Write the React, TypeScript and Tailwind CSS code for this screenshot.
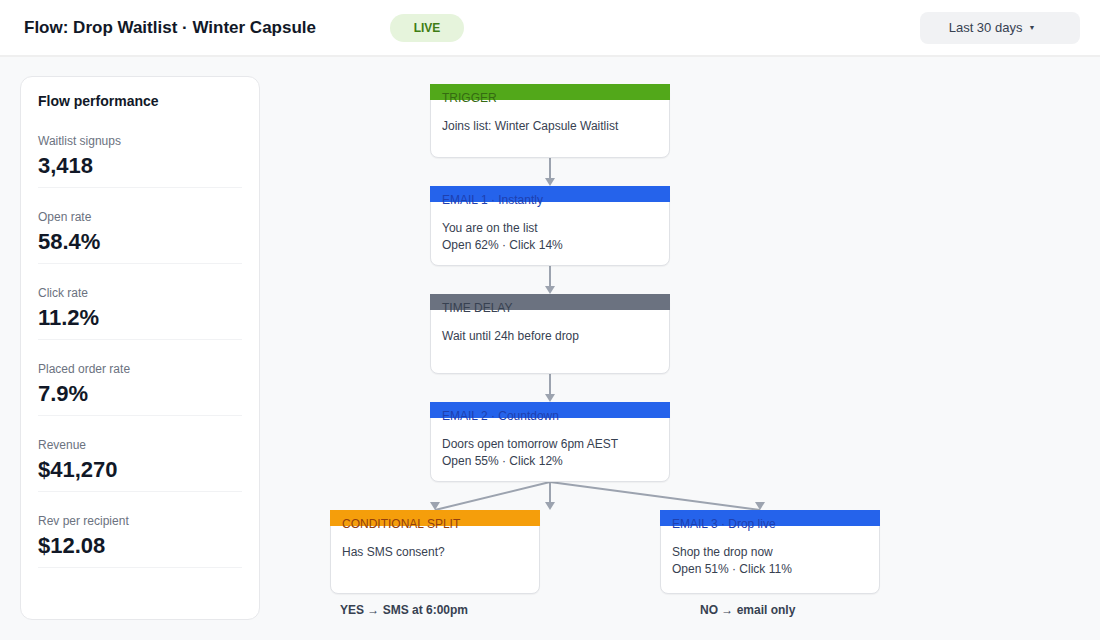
import React from "react";

type Metric = { label: string; value: string };

const metrics: Metric[] = [
  { label: "Waitlist signups", value: "3,418" },
  { label: "Open rate", value: "58.4%" },
  { label: "Click rate", value: "11.2%" },
  { label: "Placed order rate", value: "7.9%" },
  { label: "Revenue", value: "$41,270" },
  { label: "Rev per recipient", value: "$12.08" },
];

type NodeProps = {
  x: number;
  y: number;
  w: number;
  h: number;
  bar: string;
  labelColor: string;
  label: string;
  lines: string[];
};

function FlowNode({ x, y, w, h, bar, labelColor, label, lines }: NodeProps) {
  return (
    <div
      className="absolute rounded-lg border border-[#e0e2e6] bg-white shadow-[0_1px_1px_rgba(0,0,0,0.04)]"
      style={{ left: x, top: y, width: w, height: h }}
    >
      <div className={`absolute -left-px -right-px -top-px h-4 ${bar}`} />
      <div className={`relative px-[11px] pt-[5px] text-[12px] font-medium leading-[16px] ${labelColor}`}>
        {label}
      </div>
      <div className="relative mt-[12px] px-[11px] text-[12px] leading-[17px] text-[#374151]">
        {lines.map((l) => (
          <div key={l}>{l}</div>
        ))}
      </div>
    </div>
  );
}

function Arrow({ x, y }: { x: number; y: number }) {
  // arrowhead with its tip at (x, y)
  return <polygon points={`${x - 5},${y - 8} ${x + 5},${y - 8} ${x},${y}`} fill="#9ca3af" />;
}

export default function App() {
  return (
    <div
      className="flex h-[640px] w-[1100px] flex-col overflow-hidden bg-[#f8f9fa] text-[#111827]"
      style={{ fontFamily: '"Liberation Sans", Arial, sans-serif' }}
    >
      <header className="flex h-[57px] shrink-0 items-center border-b-2 border-[#efefef] bg-white pl-6 pr-5">
        <div className="w-[366px] text-[17px] font-bold">Flow: Drop Waitlist · Winter Capsule</div>
        <div className="flex h-7 w-[74px] items-center justify-center rounded-full bg-[#e6f4dc] text-[12px] font-bold text-[#3f7d14]">
          LIVE
        </div>
        <div className="ml-auto flex h-8 w-40 items-center justify-center gap-[6px] rounded-lg bg-[#f1f2f4] pr-4 text-[13px] text-[#374151]">
          <span>Last 30 days</span>
          <span className="text-[7px] leading-none">▼</span>
        </div>
      </header>

      <div className="flex flex-1 gap-5 px-5 pt-[19px] pb-5">
        <aside className="w-[240px] shrink-0 rounded-xl border border-[#e7e8eb] bg-white px-[17px] pt-[14px]">
          <div className="text-[14px] font-bold leading-[20px]">Flow performance</div>
          <div className="mt-[22px] flex flex-col gap-[21px]">
            {metrics.map((m) => (
              <div key={m.label} className="border-b border-[#f1f2f4] pb-[8px]">
                <div className="text-[12px] leading-[16px] text-[#6b7280]">{m.label}</div>
                <div className="mt-1 text-[22px] font-bold leading-[26px] text-[#111827]">{m.value}</div>
              </div>
            ))}
          </div>
        </aside>

        <div className="relative flex-1">
          <svg className="absolute inset-0" width="800" height="564">
            <g stroke="#9ca3af" strokeWidth="2" fill="none">
              <line x1="270" y1="82" x2="270" y2="104" />
              <line x1="270" y1="190" x2="270" y2="212" />
              <line x1="270" y1="298" x2="270" y2="320" />
              <line x1="270" y1="406" x2="270" y2="428" />
              <line x1="270" y1="406" x2="155" y2="434" />
              <line x1="270" y1="406" x2="480" y2="434" />
            </g>
            <Arrow x={270} y={110} />
            <Arrow x={270} y={218} />
            <Arrow x={270} y={326} />
            <Arrow x={270} y={434} />
            <Arrow x={155} y={434} />
            <Arrow x={480} y={434} />
          </svg>

          <FlowNode
            x={150}
            y={8}
            w={240}
            h={74}
            bar="bg-[#52a81a]"
            labelColor="text-[#356b12]"
            label="TRIGGER"
            lines={["Joins list: Winter Capsule Waitlist"]}
          />
          <FlowNode
            x={150}
            y={110}
            w={240}
            h={80}
            bar="bg-[#2563eb]"
            labelColor="text-[#1e40af]"
            label="EMAIL 1 · Instantly"
            lines={["You are on the list", "Open 62% · Click 14%"]}
          />
          <FlowNode
            x={150}
            y={218}
            w={240}
            h={80}
            bar="bg-[#6b7280]"
            labelColor="text-[#374151]"
            label="TIME DELAY"
            lines={["Wait until 24h before drop"]}
          />
          <FlowNode
            x={150}
            y={326}
            w={240}
            h={80}
            bar="bg-[#2563eb]"
            labelColor="text-[#1e40af]"
            label="EMAIL 2 · Countdown"
            lines={["Doors open tomorrow 6pm AEST", "Open 55% · Click 12%"]}
          />
          <FlowNode
            x={50}
            y={434}
            w={210}
            h={84}
            bar="bg-[#f59e0b]"
            labelColor="text-[#92400e]"
            label="CONDITIONAL SPLIT"
            lines={["Has SMS consent?"]}
          />
          <FlowNode
            x={380}
            y={434}
            w={220}
            h={84}
            bar="bg-[#2563eb]"
            labelColor="text-[#1e40af]"
            label="EMAIL 3 · Drop live"
            lines={["Shop the drop now", "Open 51% · Click 11%"]}
          />

          <div className="absolute left-[60px] top-[526px] text-[12px] font-bold leading-[16px] text-[#374151]">
            YES → SMS at 6:00pm
          </div>
          <div className="absolute left-[420px] top-[526px] text-[12px] font-bold leading-[16px] text-[#374151]">
            NO → email only
          </div>
        </div>
      </div>
    </div>
  );
}
